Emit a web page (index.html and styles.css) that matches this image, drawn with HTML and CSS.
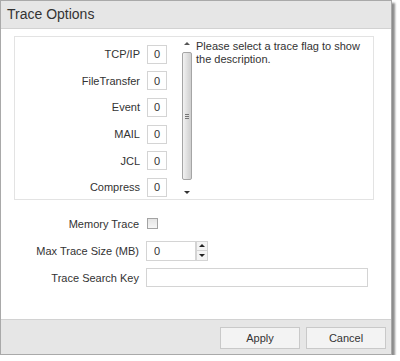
FILE: index.html
```html
<!DOCTYPE html>
<html lang="en">
<head>
  <meta charset="UTF-8">
  <title>Trace Options</title>
  <link rel="stylesheet" href="styles.css">
</head>
<body>
  <div class="dialog">
    <div class="dialog-title">Trace Options</div>
    <div class="dialog-body">
      <div class="flag-panel">
        <div class="flag-list">
          <div class="flag-row"><label>TCP/IP</label><input class="flag-input" type="text" value="0"></div>
          <div class="flag-row"><label>FileTransfer</label><input class="flag-input" type="text" value="0"></div>
          <div class="flag-row"><label>Event</label><input class="flag-input" type="text" value="0"></div>
          <div class="flag-row"><label>MAIL</label><input class="flag-input" type="text" value="0"></div>
          <div class="flag-row"><label>JCL</label><input class="flag-input" type="text" value="0"></div>
          <div class="flag-row"><label>Compress</label><input class="flag-input" type="text" value="0"></div>
        </div>
        <div class="scrollbar">
          <div class="arrow arrow-up"></div>
          <div class="thumb"><span class="grip"></span></div>
          <div class="arrow arrow-down"></div>
        </div>
        <div class="flag-desc">Please select a trace flag to show the description.</div>
      </div>
      <div class="option-rows">
        <div class="option-row">
          <label>Memory Trace</label>
          <span class="checkbox"></span>
        </div>
        <div class="option-row">
          <label>Max Trace Size (MB)</label>
          <div class="spinner">
            <input class="spin-input" type="text" value="0">
            <div class="spin-btns">
              <span class="spin-btn"><i class="tri-up"></i></span>
              <span class="spin-btn"><i class="tri-down"></i></span>
            </div>
          </div>
        </div>
        <div class="option-row">
          <label>Trace Search Key</label>
          <input class="key-input" type="text" value="">
        </div>
      </div>
    </div>
    <div class="dialog-footer">
      <button class="btn">Apply</button>
      <button class="btn">Cancel</button>
    </div>
  </div>
</body>
</html>
```

FILE: styles.css
```css
body {
  margin: 0;
  padding: 0;
  background: #fff;
  font-family: Arial, 'Liberation Sans', sans-serif;
  font-size: 11px;
  color: #333;
}
.dialog {
  width: 390px;
  height: 353px;
  border: 1px solid #a9a9a9;
  background: #fff;
  box-shadow: 3px 3px 2px rgba(0,0,0,0.45);
  display: flex;
  flex-direction: column;
}
.dialog-title {
  height: 27px;
  line-height: 27px;
  padding-left: 6px;
  background: #e6e6e6;
  border-bottom: 1px solid #d2d2d2;
  font-size: 14px;
  color: #333;
}
.dialog-body {
  flex: 1;
  padding: 7px 0 0 13px;
}
.flag-panel {
  width: 358px;
  height: 162px;
  border: 1px solid #e3e3e3;
  display: flex;
}
.flag-list {
  width: 166px;
  padding-top: 4px;
}
.flag-row {
  height: 26.6px;
  display: flex;
  align-items: center;
}
.flag-row label {
  width: 125px;
  text-align: right;
  margin-right: 7px;
}
.flag-input {
  box-sizing: border-box;
  width: 20px;
  height: 19px;
  border: 1px solid #d4d4d4;
  padding: 0;
  text-align: center;
  font: 11px Arial, 'Liberation Sans', sans-serif;
  color: #333;
}
.scrollbar {
  width: 12px;
  display: flex;
  flex-direction: column;
  align-items: center;
}
.arrow {
  height: 15px;
  width: 12px;
  position: relative;
}
.arrow::after {
  content: '';
  position: absolute;
  left: 3px;
  border-left: 3px solid transparent;
  border-right: 3px solid transparent;
}
.arrow-up::after {
  top: 5px;
  border-bottom: 3px solid #555;
}
.arrow-down::after {
  top: 7px;
  border-top: 3px solid #333;
}
.thumb {
  flex: 1;
  width: 10px;
  box-sizing: border-box;
  border: 1px solid #a5a5a5;
  border-radius: 2px;
  background: linear-gradient(to right, #f2f2f2, #dcdcdc 60%, #cfcfcf);
  display: flex;
  align-items: center;
  justify-content: center;
  margin-bottom: 4px;
}
.grip {
  width: 4px;
  height: 5px;
  border-top: 1px solid #777;
  border-bottom: 1px solid #777;
  box-sizing: border-box;
  background: linear-gradient(#777, #777) center / 4px 1px no-repeat;
}
.flag-desc {
  flex: 1;
  padding: 3px 4px 0 3px;
  line-height: 13px;
}
.option-rows {
  padding-top: 10px;
}
.option-row {
  height: 27px;
  display: flex;
  align-items: center;
}
.option-row label {
  width: 125px;
  text-align: right;
  margin-right: 7px;
}
.checkbox {
  width: 9px;
  height: 9px;
  border: 1px solid #a3a3a3;
  background: linear-gradient(#e4e4e4, #f6f6f6);
  margin-left: 1px;
}
.spinner {
  display: flex;
}
.spin-input {
  box-sizing: border-box;
  width: 50px;
  height: 20px;
  border: 1px solid #d4d4d4;
  padding: 0 0 0 7px;
  font: 11px Arial, 'Liberation Sans', sans-serif;
  color: #333;
}
.spin-btns {
  display: flex;
  flex-direction: column;
}
.spin-btn {
  box-sizing: border-box;
  width: 12px;
  height: 10px;
  border: 1px solid #d4d4d4;
  background: #f4f4f4;
  display: flex;
  align-items: center;
  justify-content: center;
}
.spin-btn + .spin-btn {
  border-top: none;
}
.tri-up {
  border-left: 3px solid transparent;
  border-right: 3px solid transparent;
  border-bottom: 3px solid #222;
}
.tri-down {
  border-left: 3px solid transparent;
  border-right: 3px solid transparent;
  border-top: 3px solid #222;
}
.key-input {
  box-sizing: border-box;
  width: 222px;
  height: 19px;
  border: 1px solid #d4d4d4;
  padding: 0 4px;
  font: 11px Arial, 'Liberation Sans', sans-serif;
}
.dialog-footer {
  height: 35px;
  background: #e6e6e6;
  border-top: 1px solid #d2d2d2;
  display: flex;
  justify-content: flex-end;
  align-items: flex-start;
  gap: 6px;
  padding: 7px 5px 0 0;
  box-sizing: border-box;
}
.btn {
  width: 80px;
  height: 22px;
  border: 1px solid #c9c9c9;
  background: #f3f3f3;
  font: 11px Arial, 'Liberation Sans', sans-serif;
  color: #333;
  padding: 0;
}
```
